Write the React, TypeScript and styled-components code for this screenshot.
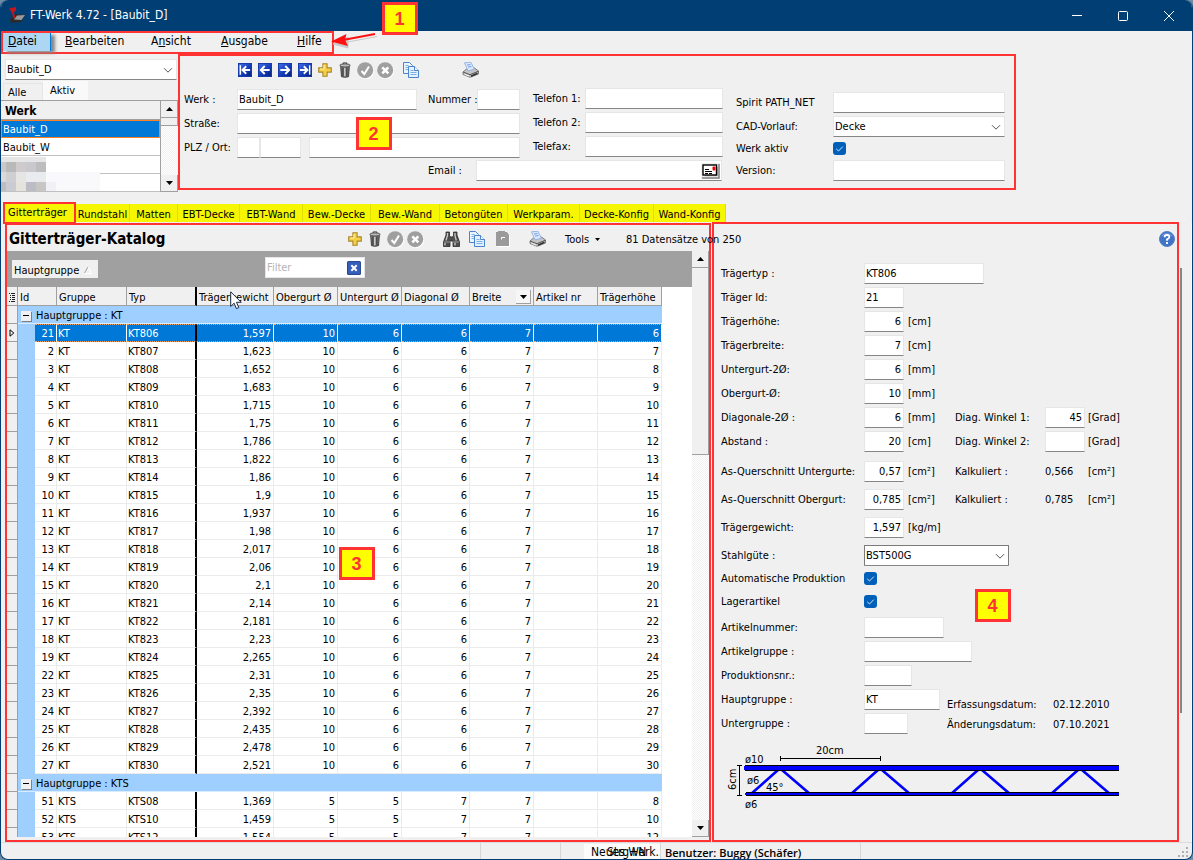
import React, { useId } from 'react';
import styled, { createGlobalStyle } from 'styled-components';

const RED = '#ff3333';
const FACE = '#f0f0f0';
const NAVY = '#003e73';
const BLUE = '#0078d7';

const Global = createGlobalStyle`
  * { box-sizing: border-box; }
  body {
    margin: 0;
    background: #6f8aa5;
    color: #000;
    font-family: "DejaVu Sans Condensed", Tahoma, sans-serif;
    font-size: 11px;
    line-height: 15px;
  }
  button, input, select { font: inherit; color: inherit; margin: 0; padding: 0; border: 0; border-radius: 0; }
  button { background: none; }
  svg { display: block; flex: none; }
`;

/* ---------- window frame ---------- */

const Window = styled.div`
  display: flex;
  flex-direction: column;
  height: 100vh;
  border: 1px solid ${NAVY};
  border-top: 0;
  border-radius: 8px;
  background: ${FACE};
  overflow: hidden;
`;

const TitleBar = styled.header`
  display: flex;
  flex: none;
  align-items: center;
  height: 31px;
  padding-left: 8px;
  background: ${NAVY};
  color: #fff;
`;

const Title = styled.h1`
  flex: 1;
  margin: 0 0 0 4px;
  font-size: 12px;
  font-weight: 400;
`;

const CaptionButton = styled.button`
  display: grid;
  place-items: center;
  width: 46px;
  height: 31px;
`;

const MenuRow = styled.div`
  display: flex;
  flex: none;
  height: 23px;
`;

const MenuBar = styled.nav`
  position: relative;
  display: flex;
  width: 333px;
  height: 23px;
  border: 2px solid ${RED};
`;

const MenuItem = styled.button<{ $width: number; $active?: boolean }>`
  width: ${p => p.$width}px;
  height: 18px;
  padding: 0 0 2px ${p => (p.$active ? 5 : 0)}px;
  margin-right: ${p => (p.$active ? 14 : 0)}px;
  border-right: ${p => (p.$active ? '1px solid ' + BLUE : '0')};
  box-shadow: ${p => (p.$active ? '4px 2px 3px #888' : 'none')};
  background: ${p => (p.$active ? '#add6f5' : 'none')};
  text-align: left;
  font-size: 12px;
`;

const Badge = styled.div<{ $left: number; $top: number }>`
  position: absolute;
  z-index: 3;
  left: ${p => p.$left}px;
  top: ${p => p.$top}px;
  display: grid;
  place-items: center;
  width: 36px;
  height: 33px;
  padding-right: 1px;
  border: 3px solid ${RED};
  background: #ff0;
  color: ${RED};
  font: 700 18px/20px "Liberation Sans", Arial, sans-serif;
`;

const Arrow = styled.svg`
  position: absolute;
  z-index: 2;
  left: 326px;
  top: -3px;
`;

/* ---------- form parts ---------- */

const Field = styled.input<{ $width: number; $right?: boolean }>`
  width: ${p => p.$width}px;
  height: 21px;
  padding: 0 ${p => (p.$right ? 2 : 1)}px 0 1px;
  border: 1px solid #e6e6e6;
  border-bottom-color: #868686;
  background: #fff;
  text-align: ${p => (p.$right ? 'right' : 'left')};
  outline: 0;
`;

const SelectBox = styled.span<{ $width: number; $boxed?: boolean }>`
  position: relative;
  display: block;
  width: ${p => p.$width}px;
  height: 21px;
  border: 1px solid ${p => (p.$boxed ? '#7a7a7a' : '#e6e6e6')};
  border-bottom-color: #868686;
  border-radius: ${p => (p.$boxed ? 1 : 0)}px;
  background: #fff;
  select {
    display: block;
    width: 100%;
    height: 100%;
    padding-left: 1px;
    appearance: none;
    background: transparent;
    outline: 0;
  }
  svg { position: absolute; right: 3px; top: 7px; pointer-events: none; }
`;

const CheckWrap = styled.span`
  position: relative;
  display: block;
  width: 13px;
  height: 13px;
  input {
    display: block;
    width: 13px;
    height: 13px;
    appearance: none;
    border-radius: 3px;
    background: #005fb8;
  }
  svg { position: absolute; left: 0; top: 0; pointer-events: none; }
`;

const Chevron = () => (
  <svg width="10" height="7" viewBox="0 0 10 7" fill="none" stroke="#555">
    <path d="M1 1.2 5 5.2 9 1.2" />
  </svg>
);

function Select({ id, width, value, boxed, label }: { id?: string; width: number; value: string; boxed?: boolean; label?: string }) {
  return (
    <SelectBox $width={width} $boxed={boxed}>
      <select id={id} defaultValue={value} aria-label={label}><option>{value}</option></select>
      <Chevron />
    </SelectBox>
  );
}

function Check({ id }: { id: string }) {
  return (
    <CheckWrap>
      <input id={id} type="checkbox" defaultChecked />
      <svg width="13" height="13" viewBox="0 0 13 13" fill="none" stroke="#cfe4f7"><path d="M3.2 6.8 5.5 9 9.8 4.6" /></svg>
    </CheckWrap>
  );
}

/* ---------- icons ---------- */

const ToolButton = styled.button<{ $gap?: number }>`
  display: grid;
  flex: none;
  place-items: center;
  width: 20px;
  height: 20px;
  margin-left: ${p => p.$gap ?? 0}px;
`;

const NavIcon = ({ flip, stop }: { flip?: boolean; stop?: boolean }) => (
  <svg width="14" height="14" viewBox="0 0 15 15">
    <defs>
      <linearGradient id="navy" x1="0" y1="0" x2="1" y2="1">
        <stop offset="0" stopColor="#3f6fe8" /><stop offset=".6" stopColor="#1238b4" /><stop offset="1" stopColor="#062070" />
      </linearGradient>
    </defs>
    <rect x=".5" y=".5" width="14" height="14" fill="url(#navy)" stroke="#1236a8" />
    <g transform={flip ? 'translate(15 0) scale(-1 1)' : undefined} stroke="#fff" strokeWidth="2" fill="none">
      {stop && <path d="M2.5 2.5v10" strokeWidth="1.6" />}
      <path d={stop ? 'M4.8 7.5H13M8.8 3.5 4.8 7.5l4 4' : 'M3 7.5h9.5M7.2 3.2 3 7.5l4.2 4.3'} />
    </g>
  </svg>
);

const PlusIcon = () => (
  <svg width="14" height="14" viewBox="0 0 14 14">
    <path d="M4.9.7h4.2v4.200h4.200v4.200h-4.200v4.200H4.900v-4.200H.7V4.900h4.200z" fill="#f7d046" stroke="#a8862a" strokeWidth="1.1" />
    <path d="M6 2v4H2" fill="none" stroke="#fff3b0" />
  </svg>
);

const TrashIcon = () => (
  <svg width="12" height="16" viewBox="0 0 13 17">
    <path d="M1.800 4.500h9.400l-.9 11.200q-3.800 1.300-7.600 0z" fill="#777" stroke="#3a3a3a" />
    <path d="M4.200 6v9M8.500 6v9" stroke="#333" />
    <path d="M6.300 6v9.200" stroke="#d8d8d8" strokeWidth="1.4" />
    <ellipse cx="6.500" cy="3.600" rx="5.700" ry="1.700" fill="#bbb" stroke="#4a4a4a" />
    <path d="M4.500 2V.8h4V2" fill="none" stroke="#3a3a3a" />
  </svg>
);

const RoundIcon = ({ cross }: { cross?: boolean }) => (
  <svg width="17" height="17" viewBox="0 0 17 17">
    <circle cx="9" cy="9" r="8" fill="#fff" />
    <circle cx="8.200" cy="8.200" r="8" fill="#9f9f9f" />
    <path d={cross ? 'M5.300 5.300l6 6M11.300 5.300l-6 6' : 'M4.500 9l2.800 3L12 4.500'} stroke="#fff" strokeWidth={cross ? 2.600 : 2} fill="none" />
  </svg>
);

const CopyIcon = () => (
  <svg width="16" height="16" viewBox="0 0 16 16" stroke="#4a84cc">
    <path d="M.5.5h6l3 3v8h-9z" fill="#eaf4ff" />
    <path d="M2.500 3.500h3M2.500 5.500h4M2.500 7.500h4" stroke="#7fb0e4" />
    <path d="M5.500 4.500h6l4 4v7h-10z" fill="#e2f0ff" />
    <path d="M11.500 4.500v4h4" fill="#fff" />
    <path d="M7.500 8.500h3M7.500 10.500h6M7.500 12.500h6" stroke="#7fb0e4" />
  </svg>
);

const PasteIcon = () => (
  <svg width="15" height="16" viewBox="0 0 15 16">
    <path d="M2 2h10l3 3v11H2z" fill="#fff" />
    <path d="M1 1h2V0h7v1h2l2 3v11H1z" fill="#9a9a9a" />
    <path d="M6.500 8.500v-2H10" stroke="#fff" fill="none" />
  </svg>
);

const PrinterIcon = () => (
  <svg width="17" height="16" viewBox="0 0 17 16">
    <path d="M1 10 4.500 7l2 1 6-2 4 3v3L8 15.300 1 12.500z" fill="#c4c4c4" stroke="#666" strokeWidth=".8" />
    <path d="M2.500.8 9 .3l3.300 7L6 8.800z" fill="#dceaff" stroke="#8fb0e4" strokeWidth=".9" />
    <path d="M5 3l3.500-.4M6 5l3.500-.4" stroke="#6f9be0" />
    <path d="M1 10l7 2.700 8.500-3.500" fill="none" stroke="#555" />
    <path d="M2.500 12.300l4.500 1.700" stroke="#f4f4f4" />
    <path d="M9 14.200l6.500-2.900" stroke="#333" strokeWidth="1.500" />
  </svg>
);

const BinocularsIcon = () => (
  <svg width="17" height="16" viewBox="0 0 17 16">
    <path d="M3 1h3.500v4L8 6h1l1.500-1V1H14v3l2.500 7v4.500H10V10H7v5.500H.5V11L3 4z" fill="#4d4d4d" stroke="#2d2d2d" strokeWidth=".8" />
    <path d="M4.500 2v2.500L3 9.500M12 2v3l1.300 4.500M2 12v2.500M12 11.500v3" stroke="#c9c9c9" fill="none" strokeWidth="1.300" />
    <path d="M1 11h6M10 11h6" stroke="#999" />
  </svg>
);

const HelpIcon = () => (
  <svg width="16" height="16" viewBox="0 0 16 16">
    <circle cx="8" cy="8" r="7.500" fill="#3f74c8" stroke="#5580c0" />
    <path d="M3 5a6 5 0 0 1 10 0" stroke="#7fa8e6" fill="none" />
    <path d="M5.600 6.300Q5.600 4 8 4t2.400 2.100Q10.400 7.500 8 8.300v1.500" stroke="#fff" strokeWidth="1.800" fill="none" />
    <path d="M8 11v2" stroke="#fff" strokeWidth="1.900" />
  </svg>
);

const AppIcon = () => (
  <svg width="17" height="17" viewBox="0 0 17 17">
    <path d="M1 12 6 7l10 1-4 7-10 1z" fill="#2b2b2b" />
    <path d="M5 12.500 8 8.500l8-.5-3.500 5z" fill="#9a9a9a" />
    <path d="M.5 2.500 7 1M2.500 1l3 10M2 4.500l5-1.500" stroke="#c8141c" strokeWidth="1.900" fill="none" />
  </svg>
);

const MailIcon = () => (
  <svg width="19" height="16" viewBox="0 0 19 16">
    <path d="M1 15h17V1" fill="none" stroke="#808080" strokeWidth="1.500" />
    <path d="M4 12.700h12.300V4" fill="none" stroke="#a0a0a0" />
    <rect x="2" y="2" width="13.500" height="10" fill="#fff" stroke="#000" strokeWidth="1.400" />
    <path d="M4 6.500h4M4 8.500h7M4 10.500h3m1 0h3" stroke="#000" />
    <rect x="11.500" y="3.500" width="3" height="4" rx="1" fill="#f00000" />
  </svg>
);

/* ---------- plant list and plant form ---------- */

const HeaderArea = styled.div`
  display: flex;
  flex: none;
  height: 148px;
`;

const Sidebar = styled.aside`
  width: 177px;
  flex: none;
  padding-top: 5px;
`;

const SidebarSelect = styled.div`
  padding-left: 4px;
`;

const SmallTabs = styled.div`
  display: flex;
  align-items: flex-end;
  height: 20px;
  padding-left: 2px;
`;

const SmallTab = styled.button<{ $active?: boolean }>`
  width: ${p => (p.$active ? 45 : 40)}px;
  height: ${p => (p.$active ? 19 : 17)}px;
  padding: 0 0 ${p => (p.$active ? 1 : 0)}px ${p => (p.$active ? 6 : 4)}px;
  border: 1px solid ${p => (p.$active ? '#fafafa' : '#e6e6e6')};
  border-bottom: 0;
  background: ${p => (p.$active ? '#f9f9f9' : FACE)};
  text-align: left;
`;

const PlantBox = styled.div`
  position: relative;
  display: flex;
  height: 92px;
  border-top: 1px solid #a0a0a0;
  background: #fff;
  overflow: hidden;
`;

const PlantTable = styled.table`
  width: 161px;
  align-self: flex-start;
  border-collapse: separate;
  border-spacing: 0;
  border-right: 1px solid #a0a0a0;
  th, td { height: 18px; padding: 2px 1px 0 2px; text-align: left; border-bottom: 1px solid #c0c0c0; }
  th { height: 19px; padding-left: 4px; background: ${FACE}; font-size: 12px; font-weight: 700; border-bottom-color: #a0a0a0; }
`;

const PlantCell = styled.td<{ $selected?: boolean }>`
  background: ${p => (p.$selected ? BLUE : '#fff')};
  color: ${p => (p.$selected ? '#fff' : '#000')};
  outline: ${p => (p.$selected ? '1px solid #ff8020' : '0')};
  outline-offset: -1px;
`;

const Mosaic = styled.svg`
  position: absolute;
  left: 0;
  top: 56px;
`;

const ScrollTrack = styled.div`
  display: flex;
  flex-direction: column;
  flex: none;
  width: 17px;
  background: repeating-conic-gradient(#f0f0f0 0 25%, #fff 0 50%) 0 0 / 2px 2px;
`;

const ScrollButton = styled.button`
  display: grid;
  place-items: center;
  flex: none;
  height: 17px;
  background: ${FACE};
  border-right: 1px solid #a0a0a0;
  border-bottom: 1px solid #a0a0a0;
`;

const Thumb = styled.div<{ $height: number }>`
  height: ${p => p.$height}px;
  margin-bottom: auto;
  border: 1px solid #a0a0a0;
  border-width: 0 1px 1px 0;
  background: ${FACE};
`;

const Triangle = ({ up }: { up?: boolean }) => (
  <svg width="7" height="4" viewBox="0 0 7 4"><path d={up ? 'M0 4 3.500 0 7 4z' : 'M0 0h7L3.500 4z'} /></svg>
);

function ScrollBar({ thumb }: { thumb: number }) {
  return (
    <ScrollTrack>
      <ScrollButton aria-label="Nach oben"><Triangle up /></ScrollButton>
      <Thumb $height={thumb} />
      <ScrollButton aria-label="Nach unten"><Triangle /></ScrollButton>
    </ScrollTrack>
  );
}

const PlantPanel = styled.section`
  position: relative;
  flex: none;
  width: 838px;
  height: 136px;
  padding: 0 0 0 4px;
  border: 2px solid ${RED};
`;

const Toolbar = styled.div<{ $indent: number }>`
  display: flex;
  align-items: center;
  height: 28px;
  padding-left: ${p => p.$indent}px;
`;

const PlantForm = styled.div`
  display: flex;
  gap: 13px;
  padding-top: 4px;
`;

const Stack = styled.div<{ $gap?: number; $top?: number; $left?: number }>`
  display: flex;
  flex-direction: column;
  gap: ${p => p.$gap ?? 3}px;
  padding: ${p => p.$top ?? 0}px 0 0 ${p => p.$left ?? 0}px;
`;

const Line = styled.div<{ $indent?: number; $height?: number }>`
  display: flex;
  align-items: center;
  height: ${p => p.$height ?? 21}px;
  padding-left: ${p => p.$indent ?? 0}px;
  white-space: nowrap;
`;

const Split = styled.div`
  display: flex;
  gap: 13px;
`;

const Label = styled.label<{ $width: number; $indent?: number }>`
  flex: none;
  width: ${p => p.$width}px;
  padding-left: ${p => p.$indent ?? 0}px;
  white-space: nowrap;
`;

const MailBox = styled.span`
  display: flex;
  width: 246px;
  height: 21px;
  border: 1px solid #e6e6e6;
  border-bottom-color: #868686;
  background: #fff;
  input { flex: 1; min-width: 0; outline: 0; }
  button { align-self: center; margin-right: 1px; background: ${FACE}; }
`;

/* ---------- tab strip ---------- */

const TabStrip = styled.nav`
  display: flex;
  flex: none;
  align-items: flex-end;
  height: 21px;
  padding-left: 2px;
  position: relative;
  z-index: 1;
`;

const Tab = styled.button<{ $width: number; $active?: boolean }>`
  width: ${p => p.$width}px;
  height: ${p => (p.$active ? 22 : 18)}px;
  margin-bottom: ${p => (p.$active ? -1 : 1)}px;
  padding: ${p => (p.$active ? '0 4px 1px 0' : '2px 0 0')};
  border: ${p => (p.$active ? '2px solid ' + RED : '0')};
  border-right: ${p => (p.$active ? '2px solid ' + RED : '1px solid #e0e000')};
  background: #f6f600;
  text-align: center;
  white-space: nowrap;
`;

const tabs: [string, number][] = [
  ['Rundstahl', 54], ['Matten', 48], ['EBT-Decke', 62], ['EBT-Wand', 63], ['Bew.-Decke', 68],
  ['Bew.-Wand', 69], ['Betongüten', 68], ['Werkparam.', 72], ['Decke-Konfig', 74], ['Wand-Konfig', 72],
];

/* ---------- catalogue ---------- */

const Main = styled.main`
  display: flex;
  flex: 1;
  min-height: 0;
  padding-left: 4px;
`;

const Catalog = styled.section`
  position: relative;
  z-index: 1;
  display: flex;
  flex-direction: column;
  flex: none;
  width: 706px;
  border: 2px solid ${RED};
`;

const CatalogBar = styled.div`
  display: flex;
  flex: none;
  align-items: center;
  height: 26px;
  padding: 2px 0 0 2px;
  white-space: nowrap;
`;

const CatalogTitle = styled.h2`
  flex: none;
  width: 336px;
  margin: 0;
  font-size: 15px;
  line-height: 20px;
  font-weight: 700;
`;

const ToolsMenu = styled.button`
  display: flex;
  flex: none;
  align-items: center;
  gap: 6px;
  width: 61px;
  margin-left: 18px;
`;

const CatalogBody = styled.div`
  display: flex;
  flex: 1;
  min-height: 0;
  margin-bottom: 3px;
  background: #fff;
`;

const GridArea = styled.div`
  flex: 1;
  min-width: 0;
  overflow: hidden;
`;

const GroupPanel = styled.div`
  display: flex;
  align-items: flex-start;
  height: 36px;
  padding: 6px 0 0 5px;
  background: #a0a0a0;
`;

const GroupChip = styled.button`
  display: flex;
  align-items: center;
  gap: 5px;
  width: 86px;
  height: 18px;
  margin: 3px 167px 0 0;
  padding: 2px 0 0 2px;
  background: ${FACE};
`;

const FilterBox = styled.span`
  display: flex;
  align-items: center;
  width: 100px;
  height: 21px;
  padding: 0 3px 0 1px;
  border: 1px solid #e6e6e6;
  background: #fff;
  input { flex: 1; min-width: 0; outline: 0; }
  input::placeholder { color: #b4b4b4; opacity: 1; }
`;

const Grid = styled.table`
  width: 655px;
  table-layout: fixed;
  border-collapse: separate;
  border-spacing: 0;
  th { height: 19px; padding: 2px 0 0 2px; background: ${FACE}; border-right: 1px solid #a0a0a0; border-bottom: 1px solid #a0a0a0; font-weight: 400; text-align: left; white-space: nowrap; }
  th:nth-child(4) { border-right: 2px solid #000; }
  td { height: 18px; white-space: nowrap; overflow: hidden; }
`;

const Indicator = styled.td`
  padding: 0 0 0 2px;
  background: ${FACE};
  border-right: 1px solid #a0a0a0;
  border-bottom: 1px solid #a0a0a0;
`;

const Indent = styled.td`
  padding: 0;
  background: #9fcfff;
`;

const Cell = styled.td<{ $num?: boolean; $bar?: boolean; $sel?: boolean }>`
  padding: ${p => (p.$sel ? 1 : 2)}px 2px 0 1px;
  text-align: ${p => (p.$num ? 'right' : 'left')};
  border-right: ${p => (p.$bar ? '2px solid #000' : '1px solid ' + (p.$sel ? '#fff' : '#ebebeb'))};
  border-bottom: 1px solid #ebebeb;
  background: ${p => (p.$sel ? BLUE : '#fff')};
  color: ${p => (p.$sel ? '#fff' : '#000')};
  ${p => p.$sel && 'border-top: 1px dotted #f0a060; border-bottom: 1px dotted #f0a060;'}
`;

const GroupCell = styled.td`
  padding: 2px 0 0;
  background: #9fcfff;
  border-bottom: 1px solid #d8ebff;
`;

const GroupTitle = styled.span`
  display: flex;
  align-items: center;
  gap: 5px;
  padding-left: 3px;
`;

const Toggle = styled.button`
  display: grid;
  place-items: center;
  width: 10px;
  height: 10px;
  background: ${FACE};
  box-shadow: 1px 1px 0 #808080;
`;

const HeadFlex = styled.span`
  display: flex;
  justify-content: space-between;
  align-items: center;
  padding-right: 2px;
`;

const DropButton = styled.button`
  display: grid;
  place-items: center;
  width: 15px;
  height: 14px;
  border-right: 1px solid #a0a0a0;
  border-bottom: 1px solid #a0a0a0;
  background: #f6f6f6;
`;

const Pointer = styled.svg`
  position: absolute;
  z-index: 2;
  left: 223px;
  top: 66px;
`;

const widths = [11, 17, 22, 70, 70, 77, 64, 64, 68, 64, 64, 64];
const weights = ['1,597', '1,623', '1,652', '1,683', '1,715', '1,75', '1,786', '1,822', '1,86', '1,9', '1,937', '1,98', '2,017', '2,06', '2,1', '2,14', '2,181', '2,23', '2,265', '2,31', '2,35', '2,392', '2,435', '2,478', '2,521'];

type Girder = { id: number; group: string; type: string; weight: string; top: number; bottom: number; diagonal: number; height: number };

/* Id 21 belongs to KT806, so the running ids skip 20 and 21 */
const kt: Girder[] = weights.map((weight, i) => ({
  id: i === 0 ? 21 : i < 19 ? i + 1 : i + 3,
  group: 'KT', type: 'KT' + (806 + i), weight, top: 10, bottom: 6, diagonal: 6, height: 6 + i,
}));

const kts: Girder[] = [
  { id: 51, group: 'KTS', type: 'KTS08', weight: '1,369', top: 5, bottom: 5, diagonal: 7, height: 8 },
  { id: 52, group: 'KTS', type: 'KTS10', weight: '1,459', top: 5, bottom: 5, diagonal: 7, height: 10 },
  { id: 53, group: 'KTS', type: 'KTS12', weight: '1,554', top: 5, bottom: 5, diagonal: 7, height: 12 },
];

function GroupRow({ name }: { name: string }) {
  return (
    <tr>
      <Indicator />
      <GroupCell colSpan={11}>
        <GroupTitle>
          <Toggle aria-label="Gruppe einklappen"><svg width="6" height="1"><rect width="6" height="1" /></svg></Toggle>
          Hauptgruppe : {name}
        </GroupTitle>
      </GroupCell>
    </tr>
  );
}

function GirderRow({ g, sel }: { g: Girder; sel?: boolean }) {
  return (
    <tr>
      <Indicator>
        {sel && <svg width="6" height="8" viewBox="0 0 6 8" fill="none" stroke="#000"><path d="M1 .8v6.400L4.800 4z" /></svg>}
      </Indicator>
      <Indent />
      <Cell $num $sel={sel}>{g.id}</Cell>
      <Cell $sel={sel}>{g.group}</Cell>
      <Cell $bar $sel={sel}>{g.type}</Cell>
      <Cell $num $sel={sel}>{g.weight}</Cell>
      <Cell $num $sel={sel}>{g.top}</Cell>
      <Cell $num $sel={sel}>{g.bottom}</Cell>
      <Cell $num $sel={sel}>{g.diagonal}</Cell>
      <Cell $num $sel={sel}>7</Cell>
      <Cell $sel={sel} />
      <Cell $num $sel={sel}>{g.height}</Cell>
    </tr>
  );
}

/* ---------- detail form ---------- */

const Detail = styled.section`
  position: relative;
  flex: 1;
  min-width: 0;
  margin: -1px 0 0 1px;
  padding: 39px 0 0 7px;
  border: 2px solid ${RED};
`;

const Help = styled.button`
  position: absolute;
  right: 2px;
  top: 7px;
`;

const DetailRow = styled.div<{ $gap?: number }>`
  display: grid;
  grid-template-columns: 143px 91px 90px 43px auto;
  align-items: center;
  height: 21px;
  margin-top: ${p => p.$gap ?? 3}px;
  white-space: nowrap;
`;

const WithUnit = styled.span`
  display: flex;
  align-items: center;
  gap: 4px;
`;

const Dates = styled.dl`
  display: grid;
  grid-template-columns: 106px auto;
  grid-auto-rows: 20px;
  align-items: center;
  margin: 8px 0 0 -8px;
  dt, dd { margin: 0; }
`;

const Bottom = styled.div`
  display: flex;
  ${DetailRow} { grid-template-columns: 143px 91px; }
`;

const RightStrip = styled.div`
  flex: none;
  width: 13px;
  padding: 45px 0 0 1px;
  border-right: 1px solid #fafafa;
`;

const StripThumb = styled.div`
  width: 2px;
  height: 445px;
  background: #868686;
`;

function Row({ label, gap, width = 40, value = '', unit, left, children }: {
  label: string; gap?: number; width?: number; value?: string; unit?: string; left?: boolean; children?: React.ReactNode;
}) {
  const id = useId();
  return (
    <DetailRow $gap={gap}>
      <label htmlFor={id}>{label}</label>
      <WithUnit><Field id={id} $width={width} $right={!left} defaultValue={value} />{unit && <span>{unit}</span>}</WithUnit>
      {children}
    </DetailRow>
  );
}

const GirderDrawing = () => (
  <svg width="396" height="72" viewBox="0 0 396 72" fontSize="11" fontFamily="DejaVu Sans Condensed">
    <path d="M56.500 17v5M56.500 19.500H156.500M156.500 17v5" stroke="#000" fill="none" />
    <path d="M13 26.500h5M15.500 26.500v30M13 56.500h5" stroke="#000" fill="none" />
    <g stroke="#0000ff" strokeWidth="2.600">
      {[0, 100, 200, 300].map(x => (
        <path key={x} d={`M${27 + x} 55 L${54 + x} 31 M${58 + x} 31 L${86 + x} 55`} fill="none" />
      ))}
    </g>
    <rect x="21" y="26" width="374" height="6" />
    <rect x="20" y="27" width="375" height="4" fill="#0000ff" />
    <circle cx="22" cy="29" r="2" fill="#0000ff" />
    <rect x="22" y="53" width="373" height="4" />
    <rect x="21" y="54" width="374" height="2" fill="#0000ff" />
    <text x="92" y="15">20cm</text>
    <text x="21" y="24">ø10</text>
    <text x="23" y="45">ø6</text>
    <text x="42" y="52">45°</text>
    <text x="21" y="69">ø6</text>
    <text transform="translate(12 51) rotate(-90)">6cm</text>
  </svg>
);

/* ---------- status bar ---------- */

const StatusBar = styled.footer`
  display: flex;
  flex: none;
  height: 17px;
  font-size: 12px;
  line-height: 17px;
  padding-left: 400px;
  border-top: 1px solid #dcdcdc;
`;

const StatusCell = styled.div<{ $width?: number; $grow?: boolean }>`
  position: relative;
  flex: ${p => (p.$grow ? '1' : 'none')};
  width: ${p => p.$width ?? 0}px;
  border-right: ${p => (p.$grow ? '0' : '1px solid #d7d7d7')};
  white-space: nowrap;
`;

const MenuRest = styled.div`
  height: 15px;
  margin: 1px 0 0 23px;
  padding-left: 7px;
  background: #fbfbfb;
  overflow: hidden;
`;

const Shortcut = styled.span`
  position: absolute;
  left: 46px;
  top: 1px;
`;

const User = styled.strong`
  display: block;
  padding: 1px 0 0 4px;
  font-family: "Open Sans", "Segoe UI", sans-serif;
  font-size: 11px;
  font-weight: 600;
`;

const Grip = styled.svg`
  align-self: flex-end;
  margin: 0 4px 2px 0;
`;

export default function App() {
  return (
    <>
      <Global />
      <Window>
        <TitleBar>
          <AppIcon />
          <Title>FT-Werk 4.72 - [Baubit_D]</Title>
          <CaptionButton aria-label="Minimieren"><svg width="10" height="1"><rect width="10" height="1" fill="#fff" /></svg></CaptionButton>
          <CaptionButton aria-label="Maximieren"><svg width="10" height="10" fill="none" stroke="#fff"><rect x=".5" y=".5" width="9" height="9" rx="1" /></svg></CaptionButton>
          <CaptionButton aria-label="Schließen"><svg width="10" height="10" stroke="#fff"><path d="M0 0l10 10M10 0 0 10" /></svg></CaptionButton>
        </TitleBar>

        <MenuRow>
          <MenuBar>
            <MenuItem $width={48} $active><u>D</u>atei</MenuItem>
            <MenuItem $width={86}><u>B</u>earbeiten</MenuItem>
            <MenuItem $width={70}>A<u>n</u>sicht</MenuItem>
            <MenuItem $width={76}><u>A</u>usgabe</MenuItem>
            <MenuItem $width={30}><u>H</u>ilfe</MenuItem>
            <Badge $left={379} $top={-31}>1</Badge>
            <Arrow width="52" height="24" viewBox="0 0 52 24">
              <path d="M4 14 19 7l0 11z M16 12.500 48 6.500" fill="#c9c9c9" stroke="#c9c9c9" />
              <path d="M14 10 46 4" stroke="#ff1010" strokeWidth="2" />
              <path d="M2 11.500 17.500 4 16 9.700 19 16z" fill="#ff1010" />
            </Arrow>
          </MenuBar>
        </MenuRow>

        <HeaderArea>
          <Sidebar>
            <SidebarSelect><Select width={172} value="Baubit_D" label="Werk" /></SidebarSelect>
            <SmallTabs><SmallTab>Alle</SmallTab><SmallTab $active>Aktiv</SmallTab></SmallTabs>
            <PlantBox>
              <PlantTable>
                <thead><tr><th>Werk</th></tr></thead>
                <tbody>
                  <tr><PlantCell $selected>Baubit_D</PlantCell></tr>
                  <tr><PlantCell>Baubit_W</PlantCell></tr>
                  <tr><PlantCell /></tr>
                  <tr><PlantCell /></tr>
                </tbody>
              </PlantTable>
              <Mosaic width="99" height="34">
                <rect width="99" height="34" fill="#f9f9fb" />
                <rect width="45" height="5" fill="#e6e6e6" /><rect x="45" width="54" height="15" fill="#fff" />
                <rect y="5" width="5" height="10" fill="#c9c9c9" /><rect x="5" y="5" width="10" height="10" fill="#b9b9b9" />
                <rect x="15" y="5" width="10" height="10" fill="#cfcbcd" /><rect x="25" y="5" width="10" height="10" fill="#c9c9cd" />
                <rect x="35" y="5" width="10" height="10" fill="#bdbdbd" />
                <rect y="15" width="5" height="10" fill="#d9d9d9" /><rect x="5" y="15" width="10" height="10" fill="#cfcfd1" />
                <rect x="15" y="15" width="10" height="10" fill="#e5e5e3" /><rect x="25" y="15" width="20" height="10" fill="#e9ebef" />
                <rect y="25" width="5" height="9" fill="#bdbdbd" /><rect x="5" y="25" width="10" height="9" fill="#cbcbd3" />
                <rect x="15" y="25" width="10" height="9" fill="#e6e2dc" /><rect x="25" y="25" width="10" height="9" fill="#bcbcc6" />
                <rect x="35" y="25" width="10" height="9" fill="#c8c6c4" /><rect x="45" y="25" width="10" height="9" fill="#f0f0f6" />
              </Mosaic>
              <ScrollBar thumb={8} />
            </PlantBox>
          </Sidebar>

          <PlantPanel>
            <Badge $left={176} $top={61}>2</Badge>
            <Toolbar $indent={51}>
              <ToolButton aria-label="Erster"><NavIcon stop /></ToolButton>
              <ToolButton aria-label="Zurück"><NavIcon /></ToolButton>
              <ToolButton aria-label="Weiter"><NavIcon flip /></ToolButton>
              <ToolButton aria-label="Letzter"><NavIcon flip stop /></ToolButton>
              <ToolButton aria-label="Neu"><PlusIcon /></ToolButton>
              <ToolButton aria-label="Löschen"><TrashIcon /></ToolButton>
              <ToolButton aria-label="Übernehmen"><RoundIcon /></ToolButton>
              <ToolButton aria-label="Verwerfen"><RoundIcon cross /></ToolButton>
              <ToolButton aria-label="Kopieren" $gap={6}><CopyIcon /></ToolButton>
              <ToolButton aria-label="Drucken" $gap={39}><PrinterIcon /></ToolButton>
            </Toolbar>
            <PlantForm>
              <Stack $gap={2}>
                <Split>
                  <Stack $top={1}>
                    <Line>
                      <Label $width={53} htmlFor="werk">Werk :</Label><Field id="werk" $width={180} defaultValue="Baubit_D" />
                      <Label $width={60} $indent={11} htmlFor="nummer">Nummer :</Label><Field id="nummer" $width={43} />
                    </Line>
                    <Line><Label $width={53} htmlFor="strasse">Straße:</Label><Field id="strasse" $width={283} /></Line>
                    <Line>
                      <Label $width={53} htmlFor="plz">PLZ / Ort:</Label><Field id="plz" $width={23} />
                      <Field aria-label="Postleitzahl" $width={41} />
                      <Line $indent={8}><Field aria-label="Ort" $width={211} /></Line>
                    </Line>
                  </Stack>
                  <Stack>
                    <Line><Label $width={52} htmlFor="tel1">Telefon 1:</Label><Field id="tel1" $width={138} /></Line>
                    <Line><Label $width={52} htmlFor="tel2">Telefon 2:</Label><Field id="tel2" $width={138} /></Line>
                    <Line><Label $width={52} htmlFor="fax">Telefax:</Label><Field id="fax" $width={138} /></Line>
                  </Stack>
                </Split>
                <Line $indent={244}>
                  <Label $width={48} htmlFor="email">Email :</Label>
                  <MailBox><input id="email" /><button aria-label="E-Mail senden"><MailIcon /></button></MailBox>
                </Line>
              </Stack>
              <Stack $top={4}>
                <Line><Label $width={97} htmlFor="path">Spirit PATH_NET</Label><Field id="path" $width={172} /></Line>
                <Line><Label $width={97} htmlFor="cad">CAD-Vorlauf:</Label><Select id="cad" width={172} value="Decke" /></Line>
                <Line $height={17}><Label $width={97} htmlFor="aktiv">Werk aktiv</Label><Check id="aktiv" /></Line>
                <Line><Label $width={97} htmlFor="version">Version:</Label><Field id="version" $width={172} /></Line>
              </Stack>
            </PlantForm>
          </PlantPanel>
        </HeaderArea>

        <TabStrip>
          <Tab $width={73} $active>Gitterträger</Tab>
          {tabs.map(([name, width]) => <Tab key={name} $width={width}>{name}</Tab>)}
        </TabStrip>

        <Main>
          <Catalog>
            <Badge $left={332} $top={322}>3</Badge>
            <Pointer width="13" height="19" viewBox="0 0 13 19">
              <path d="M.7.8v14.600l3.400-3.200 2.300 5.400 2.400-1-2.300-5.300h4.700z" fill="#fff" stroke="#1a2a40" />
            </Pointer>
            <CatalogBar>
              <CatalogTitle>Gitterträger-Katalog</CatalogTitle>
              <ToolButton aria-label="Neu"><PlusIcon /></ToolButton>
              <ToolButton aria-label="Löschen"><TrashIcon /></ToolButton>
              <ToolButton aria-label="Übernehmen"><RoundIcon /></ToolButton>
              <ToolButton aria-label="Verwerfen"><RoundIcon cross /></ToolButton>
              <ToolButton aria-label="Suchen" $gap={16}><BinocularsIcon /></ToolButton>
              <ToolButton aria-label="Kopieren" $gap={6}><CopyIcon /></ToolButton>
              <ToolButton aria-label="Einfügen" $gap={5}><PasteIcon /></ToolButton>
              <ToolButton aria-label="Drucken" $gap={15}><PrinterIcon /></ToolButton>
              <ToolsMenu>Tools <svg width="5" height="3"><path d="M0 0h5L2.500 3z" /></svg></ToolsMenu>
              <span>81 Datensätze von 250</span>
            </CatalogBar>
            <CatalogBody>
              <GridArea>
                <GroupPanel>
                  <GroupChip>Hauptgruppe
                    <svg width="8" height="8" viewBox="0 0 8 8" fill="none"><path d="M.5 7 4 .8" stroke="#a0a0a0" /><path d="M4 .8 7.500 7.500H.5" stroke="#fff" /></svg>
                  </GroupChip>
                  <FilterBox>
                    <input aria-label="Filter" placeholder="Filter" />
                    <button aria-label="Filter löschen">
                      <svg width="14" height="14" viewBox="0 0 13 13"><rect x=".5" y=".5" width="12" height="12" rx="1" fill="#3560b8" stroke="#244a98" /><path d="M4 4l5 5M9 4 4 9" stroke="#fff" strokeWidth="1.800" /></svg>
                    </button>
                  </FilterBox>
                </GroupPanel>
                <Grid>
                  <colgroup>{widths.map((w, i) => <col key={i} width={w} />)}</colgroup>
                  <thead>
                    <tr>
                      <th aria-label="Spalten"><svg width="6" height="9" stroke="#222"><path d="M0 .5h1M2 .5h4M1 2.500h1M3 2.500h3M1 4.500h1M3 4.500h3M1 6.500h1M3 6.500h3M0 8.500h1M2 8.500h4" /></svg></th>
                      <th colSpan={2}>Id</th><th>Gruppe</th><th>Typ</th><th>Trägergewicht</th><th>Obergurt Ø</th><th>Untergurt Ø</th><th>Diagonal Ø</th>
                      <th><HeadFlex>Breite<DropButton aria-label="Filter Breite"><Triangle /></DropButton></HeadFlex></th>
                      <th>Artikel nr</th><th>Trägerhöhe</th>
                    </tr>
                  </thead>
                  <tbody>
                    <GroupRow name="KT" />
                    {kt.map((g, i) => <GirderRow key={g.id} g={g} sel={i === 0} />)}
                    <GroupRow name="KTS" />
                    {kts.map(g => <GirderRow key={g.id} g={g} />)}
                  </tbody>
                </Grid>
              </GridArea>
              <ScrollBar thumb={187} />
            </CatalogBody>
          </Catalog>

          <Detail>
            <Badge $left={261} $top={365}>4</Badge>
            <Help aria-label="Hilfe"><HelpIcon /></Help>
            <Row gap={0} label="Trägertyp :" width={120} value="KT806" left />
            <Row label="Träger Id:" value="21" left />
            <Row label="Trägerhöhe:" value="6" unit="[cm]" />
            <Row label="Trägerbreite:" value="7" unit="[cm]" />
            <Row label="Untergurt-2Ø:" value="6" unit="[mm]" />
            <Row label="Obergurt-Ø:" value="10" unit="[mm]" />
            <Row label="Diagonale-2Ø :" value="6" unit="[mm]">
              <label htmlFor="w1">Diag. Winkel 1:</label><Field id="w1" $width={40} $right defaultValue="45" /><span>[Grad]</span>
            </Row>
            <Row label="Abstand :" value="20" unit="[cm]">
              <label htmlFor="w2">Diag. Winkel 2:</label><Field id="w2" $width={40} $right /><span>[Grad]</span>
            </Row>
            <Row gap={9} label="As-Querschnitt Untergurte:" value="0,57" unit="[cm²]">
              <span>Kalkuliert :</span><span>0,566</span><span>[cm²]</span>
            </Row>
            <Row gap={7} label="As-Querschnitt Obergurt:" value="0,785" unit="[cm²]">
              <span>Kalkuliert :</span><span>0,785</span><span>[cm²]</span>
            </Row>
            <Row gap={7} label="Trägergewicht:" value="1,597" unit="[kg/m]" />
            <DetailRow $gap={7}><label htmlFor="stahl">Stahlgüte :</label><Select id="stahl" width={145} value="BST500G" boxed /></DetailRow>
            <DetailRow $gap={2}><label htmlFor="auto">Automatische Produktion</label><Check id="auto" /></DetailRow>
            <DetailRow $gap={2}><label htmlFor="lager">Lagerartikel</label><Check id="lager" /></DetailRow>
            <Row gap={5} label="Artikelnummer:" width={80} left />
            <Row label="Artikelgruppe :" width={108} left />
            <Row label="Produktionsnr.:" width={48} left />
            <Bottom>
              <div>
                <Row label="Hauptgruppe :" width={76} value="KT" left />
                <Row label="Untergruppe :" width={44} left />
              </div>
              <Dates>
                <dt>Erfassungsdatum:</dt><dd>02.12.2010</dd>
                <dt>Änderungsdatum:</dt><dd>07.10.2021</dd>
              </Dates>
            </Bottom>
            <Stack $top={5} $left={3}><GirderDrawing /></Stack>
          </Detail>
          <RightStrip><StripThumb /></RightStrip>
        </Main>

        <StatusBar>
          <StatusCell $width={80} />
          <StatusCell $width={80} />
          <StatusCell $width={100}><MenuRest>Neues Werk...</MenuRest><Shortcut>Strg+N</Shortcut></StatusCell>
          <StatusCell $width={200}><User>Benutzer: Buggy (Schäfer)</User></StatusCell>
          <StatusCell $grow />
          <Grip width="10" height="10" fill="#b0b0b0">
            <path d="M8 0h2v2H8zM4 4h2v2H4zM8 4h2v2H8zM0 8h2v2H0zM4 8h2v2H4zM8 8h2v2H8z" />
          </Grip>
        </StatusBar>
      </Window>
    </>
  );
}
